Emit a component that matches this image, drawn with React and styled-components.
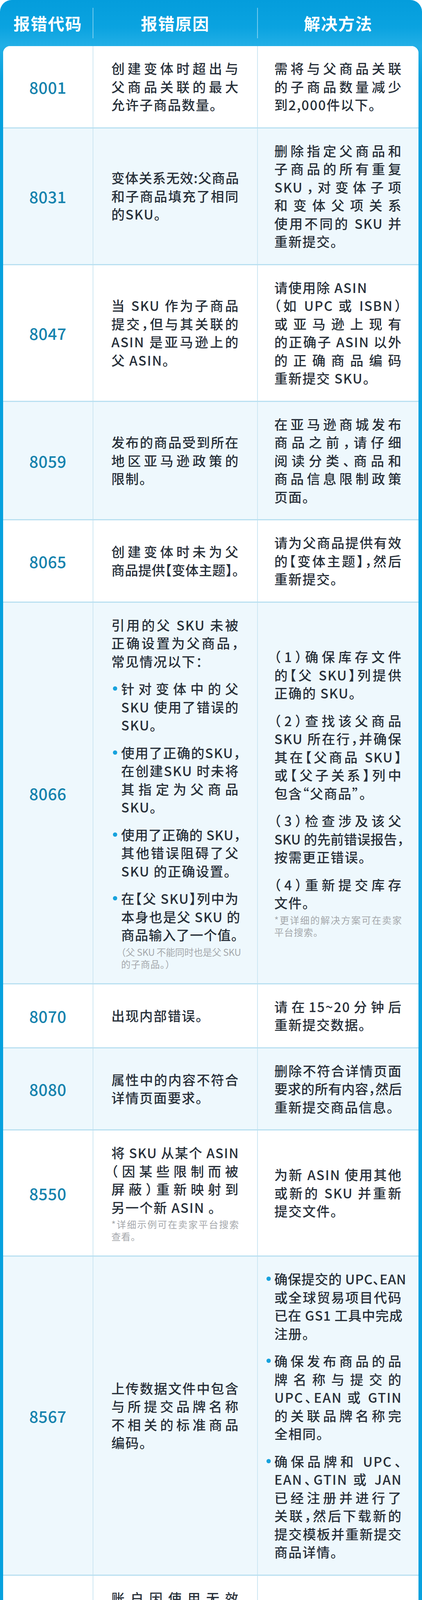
import React from 'react';
import styled, { createGlobalStyle } from 'styled-components';

const FS = 34;
const LH = 46.5;
const TEXT_W = 327;

const GlobalStyle = createGlobalStyle`
  html, body {
    margin: 0;
    padding: 0;
    background: #ffffff;
  }
  body {
    width: 1080px;
    font-family: "Noto Sans CJK SC", "Noto Sans", sans-serif;
  }
`;

const Frame = styled.div`
  width: 1080px;
  box-sizing: border-box;
  padding: 0 9px 16px 8px;
  background: linear-gradient(180deg, #049ddc 0px, #0aa3e0 70px, #22afe6 118px, #07a1de 200px, #07a1de 100%);
  border-radius: 30px 30px 24px 24px;
  box-shadow: inset 0 -5px 0 #0a8bc5;
`;

const Header = styled.div`
  display: grid;
  grid-template-columns: 229px 421px 413px;
  height: 118px;
  box-sizing: border-box;
  padding: 20px 0;
`;

const HeaderCell = styled.div`
  height: 78px;
  display: flex;
  align-items: center;
  justify-content: center;
  color: #ffffff;
  font-size: 42px;
  line-height: 78px;
  font-weight: 700;
  letter-spacing: 2px;
  border-left: ${p => (p.$divider ? '2px solid rgba(255, 255, 255, 0.45)' : 'none')};
`;

const Card = styled.div`
  background: #ffffff;
  border-radius: 18px;
  overflow: hidden;
`;

const Row = styled.div`
  display: grid;
  grid-template-columns: 229px 421px 413px;
  background: ${p => (p.$alt ? '#eef8fd' : '#ffffff')};
  & + & {
    border-top: 3px solid #b9e0f1;
  }
`;

const CodeCell = styled.div`
  display: flex;
  align-items: center;
  justify-content: center;
  padding: 34px 0;
  color: #1683ae;
  font-size: 41px;
  font-weight: 500;
  line-height: 50px;
  letter-spacing: 0.5px;
`;

const TextCell = styled.div`
  display: flex;
  align-items: center;
  justify-content: center;
  padding: 34px 0;
  border-left: 2px solid #cde7f3;
`;

const TextBlock = styled.div`
  width: ${TEXT_W}px;
  color: #28303a;
  font-size: ${FS}px;
  font-weight: 500;
  line-height: ${LH}px;
  font-feature-settings: "halt";
`;

const Para = styled.div`
  margin-top: 24px;
  &:first-child {
    margin-top: 0;
  }
`;

const Bullet = styled.div`
  position: relative;
  margin-top: 24px;
  padding-left: ${p => (p.$hang ? 0 : 25)}px;
  &:first-child {
    margin-top: 0;
  }
  &::before {
    content: '';
    position: absolute;
    left: ${p => (p.$hang ? -20 : 4)}px;
    top: 17px;
    width: 11px;
    height: 11px;
    border-radius: 50%;
    background: #17a2dd;
  }
`;

const Note = styled.div`
  margin-top: 4px;
  padding-left: ${p => (p.$indent ? 25 : 0)}px;
  color: #a5a8ac;
  font-size: 24px;
  font-weight: 400;
  line-height: 31px;
`;

const Line = styled.span`
  display: block;
  height: ${p => p.$h}px;
  white-space: nowrap;
  text-align: ${p => (p.$full ? 'justify' : 'left')};
  text-align-last: ${p => (p.$full ? 'justify' : 'left')};
  letter-spacing: ${p => p.$ls}px;
`;

const HALF = '，。、：；！？【】（）“”‘’《》';

function measure(text) {
  let w = 0;
  for (const ch of text) {
    if (HALF.includes(ch)) w += 0.5;
    else if (ch.charCodeAt(0) > 0x2e80) w += 1;
    else if (ch === ' ') w += 0.23;
    else if (/[A-Z]/.test(ch)) w += 0.6;
    else if (/[0-9]/.test(ch)) w += 0.55;
    else if (/[a-z]/.test(ch)) w += 0.5;
    else w += 0.32;
  }
  return w;
}

function spacing(text, width, fs, base) {
  const n = [...text].length;
  const natural = measure(text) * fs;
  if (natural + n * base <= width - 2) return base;
  return (width - 2 - natural) / n;
}

// lines: strings; '>' prefix = justify even if last, '<' prefix = never justify
function Lines({ lines, width, fs = FS, lh = LH, base = 2 }) {
  return lines.map((raw, i) => {
    let text = raw;
    let full = i < lines.length - 1;
    if (raw.startsWith('>')) {
      full = true;
      text = raw.slice(1);
    } else if (raw.startsWith('<')) {
      full = false;
      text = raw.slice(1);
    }
    return (
      <Line key={i} $full={full} $h={lh} $ls={spacing(text, width, fs, base)}>
        {text}
      </Line>
    );
  });
}

const p = (...lines) => ({ kind: 'p', lines });
const li = (...lines) => ({ kind: 'li', lines });
const note = (...lines) => ({ kind: 'note', lines });

const ROWS = [
  {
    code: '8001',
    reason: [p('创建变体时超出与', '父商品关联的最大', '允许子商品数量。')],
    fix: [p('需将与父商品关联', '的子商品数量减少', '到2,000件以下。')],
  },
  {
    code: '8031',
    reason: [p('变体关系无效:父商品', '和子商品填充了相同', '的SKU。')],
    fix: [p('删除指定父商品和', '子商品的所有重复', 'SKU，对变体子项', '和变体父项关系', '使用不同的 SKU 并', '重新提交。')],
  },
  {
    code: '8047',
    reason: [p('当 SKU 作为子商品', '提交，但与其关联的', 'ASIN 是亚马逊上的', '父 ASIN。')],
    fix: [p('<请使用除 ASIN', '（如 UPC 或 ISBN）', '或亚马逊上现有', '的正确子 ASIN 以外', '的正确商品编码', '重新提交 SKU。')],
  },
  {
    code: '8059',
    reason: [p('发布的商品受到所在', '地区亚马逊政策的', '限制。')],
    fix: [p('在亚马逊商城发布', '商品之前，请仔细', '阅读分类、商品和', '商品信息限制政策', '页面。')],
  },
  {
    code: '8065',
    reason: [p('创建变体时未为父', '>商品提供【变体主题】。')],
    fix: [p('请为父商品提供有效', '的【变体主题】，然后', '重新提交。')],
  },
  {
    code: '8066',
    reason: [
      p('引用的父 SKU 未被', '正确设置为父商品，', '常见情况以下：'),
      li('针对变体中的父', 'SKU 使用了错误的', 'SKU。'),
      li('使用了正确的SKU，', '在创建SKU 时未将', '其指定为父商品', 'SKU。'),
      li('使用了正确的 SKU，', '其他错误阻碍了父', 'SKU 的正确设置。'),
      li('在【父 SKU】列中为', '本身也是父 SKU 的', '商品输入了一个值。'),
      { kind: 'note', indent: true, lines: ['（父 SKU 不能同时也是父 SKU', '的子商品。）'] },
    ],
    fix: [
      p('（1）确保库存文件', '的【父 SKU】列提供', '正确的 SKU。'),
      p('（2）查找该父商品', 'SKU 所在行，并确保', '其在【父商品 SKU】', '或【父子关系】列中', '包含“父商品”。'),
      p('（3）检查涉及该父', 'SKU 的先前错误报告，', '按需更正错误。'),
      p('（4）重新提交库存', '文件。'),
      note('*更详细的解决方案可在卖家', '平台搜索。'),
    ],
  },
  {
    code: '8070',
    reason: [p('出现内部错误。')],
    fix: [p('请在15~20分钟后', '重新提交数据。')],
  },
  {
    code: '8080',
    reason: [p('属性中的内容不符合', '详情页面要求。')],
    fix: [p('删除不符合详情页面', '要求的所有内容，然后', '重新提交商品信息。')],
  },
  {
    code: '8550',
    reason: [
      p('将 SKU 从某个 ASIN', '（因某些限制而被', '屏蔽）重新映射到', '另一个新 ASIN 。'),
      note('*详细示例可在卖家平台搜索', '查看。'),
    ],
    fix: [p('为新 ASIN 使用其他', '或新的 SKU 并重新', '提交文件。')],
  },
  {
    code: '8567',
    reason: [p('上传数据文件中包含', '与所提交品牌名称', '不相关的标准商品', '编码。')],
    fix: [
      { kind: 'li', hang: true, lines: ['确保提交的 UPC、EAN', '或全球贸易项目代码', '已在 GS1 工具中完成', '注册。'] },
      { kind: 'li', hang: true, lines: ['确保发布商品的品', '牌名称与提交的', 'UPC、EAN 或 GTIN', '的关联品牌名称完', '全相同。'] },
      { kind: 'li', hang: true, lines: ['确保品牌和 UPC、', 'EAN、GTIN 或 JAN', '已经注册并进行了', '关联，然后下载新的', '提交模板并重新提交', '商品详情。'] },
    ],
  },
  {
    code: '8570',
    reason: [p('账户因使用无效', '条形码或创建重复', '的商品信息而无法', '创建新的ASIN。')],
    fix: [p('具体解决方案可于', '卖家平台查看ASIN', '创建政策。')],
  },
  {
    code: '8572',
    reason: [p('使用的UPC、EAN、', 'ISBN、ASIN或JAN 码', '>与发布的商品不匹配。')],
    fix: [p('确保指定商品使用的', '商品编码与品牌的条', '形码相符。')],
  },
  {
    code: '8604',
    reason: [p('创建变体关系时，父', '商品关联的子商品', '太少。')],
    fix: [p('请在父商品下至少', '创建一个子商品，', '>然后重新提交文件。')],
  },
];

function Blocks({ blocks }) {
  return (
    <TextBlock>
      {blocks.map((b, i) => {
        if (b.kind === 'li') {
          const w = b.hang ? TEXT_W : TEXT_W - 25;
          return (
            <Bullet key={i} $hang={b.hang}>
              <Lines lines={b.lines} width={w} />
            </Bullet>
          );
        }
        if (b.kind === 'note') {
          const w = b.indent ? TEXT_W - 25 : TEXT_W;
          return (
            <Note key={i} $indent={b.indent}>
              <Lines lines={b.lines} width={w} fs={24} lh={31} base={1} />
            </Note>
          );
        }
        return (
          <Para key={i}>
            <Lines lines={b.lines} width={TEXT_W} />
          </Para>
        );
      })}
    </TextBlock>
  );
}

export default function App() {
  return (
    <>
      <GlobalStyle />
      <Frame>
        <Header>
          <HeaderCell>报错代码</HeaderCell>
          <HeaderCell $divider>报错原因</HeaderCell>
          <HeaderCell $divider>解决方法</HeaderCell>
        </Header>
        <Card>
          {ROWS.map((r, i) => (
            <Row key={r.code} $alt={i % 2 === 1}>
              <CodeCell>{r.code}</CodeCell>
              <TextCell>
                <Blocks blocks={r.reason} />
              </TextCell>
              <TextCell>
                <Blocks blocks={r.fix} />
              </TextCell>
            </Row>
          ))}
        </Card>
      </Frame>
    </>
  );
}
